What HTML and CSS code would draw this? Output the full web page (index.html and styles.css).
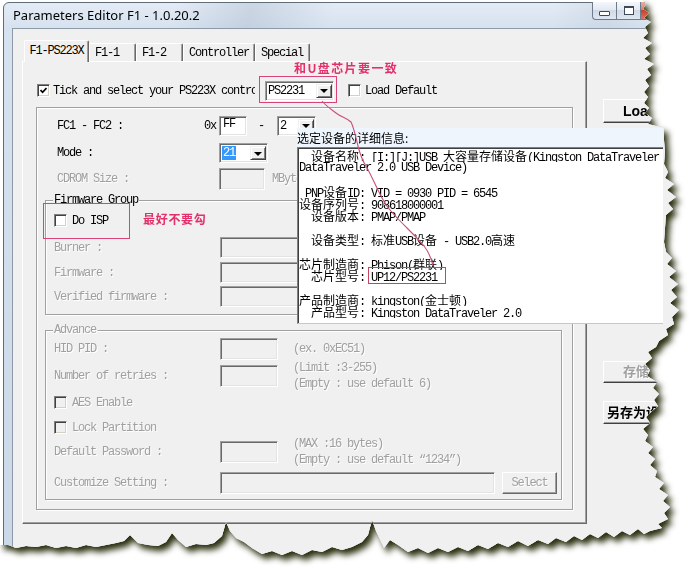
FILE: index.html
```html
<!DOCTYPE html>
<html>
<head>
<meta charset="utf-8">
<title>Parameters Editor F1</title>
<link rel="stylesheet" href="styles.css">
</head>
<body>
<div class="stage">
  <div class="sheet">
    <div class="window">
      <div class="titlebar">
        <span class="title">Parameters Editor F1 - 1.0.20.2</span>
        <div class="caption">
          <span class="cbtn cmin"><i class="ico-min"></i></span>
          <span class="cbtn cmax"><i class="ico-max"></i></span>
          <span class="cbtn cclose"></span>
        </div>
      </div>
      <div class="client">
        <div class="tabctl">
          <div class="tabstrip">
            <div class="tab sel">F1-PS223X</div>
            <div class="tab t47">F1-1</div>
            <div class="tab t47">F1-2</div>
            <div class="tab t72">Controller</div>
            <div class="tab t55">Special</div>
          </div>
          <div class="page">
            <div class="tickrow">
              <span class="chk"><svg width="7" height="7" viewBox="0 0 7 7"><path d="M0.5 3 L2.6 5.3 L6.5 1" fill="none" stroke="#000" stroke-width="1.7"/></svg></span>
              <span class="ticklbl">Tick and select your PS223X controller</span>
              <div class="combo cps"><span class="ctext">PS2231</span><span class="drop"><i class="arrow"></i></span></div>
              <span class="chk ld"></span>
              <span class="lbl-ld">Load Default</span>
            </div>
            <div class="group gmain">
              <div class="frow rfc">
                <div class="flabel"><span>FC1 - FC2 :</span><span>0x</span></div>
                <div class="edit efc">FF</div>
                <span class="dash">-</span>
                <div class="combo c2"><span class="ctext">2</span><span class="drop"><i class="arrow"></i></span></div>
              </div>
              <div class="frow rmode">
                <div class="flabel">Mode :</div>
                <div class="combo cmode"><span class="ctext"><span class="hl">21</span></span><span class="drop"><i class="arrow"></i></span></div>
              </div>
              <div class="frow rcd">
                <div class="flabel dim">CDROM Size :</div>
                <div class="edit dis ecd"></div>
                <span class="unit dim">MBytes</span>
              </div>
              <div class="group gfw">
                <span class="legend">Firmware Group</span>
                <div class="crow risp"><span class="chk"></span><span class="clbl">Do ISP</span></div>
                <div class="frow2 rburn"><span class="flabel2 dim">Burner :</span><div class="edit dis ewide"></div></div>
                <div class="frow2 rfwf"><span class="flabel2 dim">Firmware :</span><div class="edit dis ewide"></div></div>
                <div class="frow2 rver"><span class="flabel2 dim">Verified firmware :</span><div class="edit dis ewide"></div></div>
              </div>
              <div class="group gadv">
                <span class="legend dim">Advance</span>
                <div class="frow2 rhid"><span class="flabel2 dim">HID PID :</span><div class="edit dis esm"></div><span class="note dim">(ex. 0xEC51)</span></div>
                <div class="frow2 rret"><span class="flabel2 dim">Number of retries :</span><div class="edit dis esm"></div><span class="note note2 dim">(Limit :3-255)<br>(Empty : use default 6)</span></div>
                <div class="crow raes"><span class="chk dis"></span><span class="clbl dim">AES Enable</span></div>
                <div class="crow rlock"><span class="chk dis"></span><span class="clbl dim">Lock Partition</span></div>
                <div class="frow2 rpwd"><span class="flabel2 dim">Default Password :</span><div class="edit dis esm"></div><span class="note note2 dim">(MAX :16 bytes)<br>(Empty : use default “1234”)</span></div>
                <div class="frow2 rcus"><span class="flabel2 dim">Customize Setting :</span><div class="edit dis ecus"></div><span class="sbtn dim">Select</span></div>
              </div>
            </div>
          </div>
        </div>
        <div class="side">
          <div class="btn bload">Load</div>
          <div class="btn bsave dim">存储设置</div>
          <div class="btn bsaveas">另存为设置档</div>
        </div>
      </div>
    </div>

    <div class="popup">
      <div class="phead">选定设备的详细信息:</div>
      <div class="pbody">
        <div class="pl">  <span class="c">设备名称</span>: [I:][J:]USB <span class="c">大容量存储设备</span>(Kingston DataTraveler</div>
        <div class="pl">DataTraveler 2.0 USB Device)</div>
        <div class="pl"> </div>
        <div class="pl"> PNP<span class="c">设备</span>ID: VID = 0930 PID = 6545</div>
        <div class="pl"><span class="c">设备序列号</span>: 908618000001</div>
        <div class="pl">  <span class="c">设备版本</span>: PMAP/PMAP</div>
        <div class="pl"> </div>
        <div class="pl">  <span class="c">设备类型</span>: <span class="c">标准</span>USB<span class="c">设备</span> - USB2.0<span class="c">高速</span></div>
        <div class="pl"> </div>
        <div class="pl"><span class="c">芯片制造商</span>: Phison(<span class="c">群联</span>)</div>
        <div class="pl">  <span class="c">芯片型号</span>: UP12/PS2231</div>
        <div class="pl"> </div>
        <div class="pl"><span class="c">产品制造商</span>: kingston(<span class="c">金士顿</span>)</div>
        <div class="pl">  <span class="c">产品型号</span>: Kingston DataTraveler 2.0</div>
      </div>
    </div>

    <span class="mark mk-combo"></span>
    <span class="mark mk-isp"></span>
    <span class="mark mk-chip"></span>
    <span class="redtxt rt1">和U盘芯片要一致</span>
    <span class="redtxt rt2">最好不要勾</span>
    <svg class="wave" width="691" height="574" viewBox="0 0 691 574">
      <path d="M322 101 C326 106 331 109 336 113 C341 117 347 118 351 122 C354 128 356 138 358 146 C360 154 362 160 366 166 C370 173 373 180 377 188 C381 196 384 203 390 210 C396 217 402 223 408 229 C414 235 419 240 424 246 C428 251 431 257 433 266" fill="none" stroke="#c9507a" stroke-width="1.1"/>
    </svg>
  </div>
</div>
</body>
</html>
```

FILE: styles.css
```css
html, body {
  margin: 0;
  padding: 0;
  background: #fff;
}

body {
  font-family: "Liberation Mono", "Courier New", "DejaVu Sans Mono", monospace;
  font-size: 12px;
  letter-spacing: -1.2px;
  line-height: 12px;
  color: #000;
}

.stage {
  width: 691px;
  height: 574px;
  filter: drop-shadow(4px 5px 3px rgba(34, 40, 6, 0.97));
}

.sheet {
  position: relative;
  width: 691px;
  height: 574px;
  overflow: hidden;
  background: #fff;
  clip-path: polygon(
    0 0, 642px 0, 646px 4px, 643px 9px, 649px 13px, 644px 18px, 651px 22px, 645px 27px, 648px 33px, 643px 38px,
    652px 43px, 645px 48px, 650px 54px, 644px 59px, 654px 64px, 647px 69px, 651px 75px, 645px 80px, 649px 86px,
    644px 92px, 648px 97px, 644px 103px, 649px 108px, 645px 113px, 652px 118px, 648px 124px, 664px 128px,
    664px 140px, 665px 152px, 664px 164px, 668px 172px, 665px 178px, 674px 184px, 667px 190px, 676px 197px,
    668px 203px, 673px 209px, 666px 215px, 665px 228px, 664px 242px, 666px 252px, 672px 258px, 667px 264px,
    676px 271px, 669px 277px, 678px 284px, 671px 290px, 677px 297px, 670px 303px, 679px 310px, 672px 317px,
    674px 324px, 666px 329px, 668px 335px, 659px 341px, 656px 347px, 648px 352px, 652px 358px, 645px 364px,
    650px 370px, 647px 376px, 657px 382px, 653px 388px, 659px 394px, 654px 400px, 658px 406px, 651px 412px,
    646px 417px, 650px 423px, 643px 429px, 648px 435px, 645px 441px, 653px 447px, 648px 453px, 655px 459px,
    650px 465px, 657px 471px, 655px 477px, 664px 483px, 659px 489px, 668px 495px, 663px 501px, 670px 507px,
    664px 513px, 668px 519px, 658px 524px, 662px 528px, 650px 531px,
    644px 534px, 638px 529px, 630px 535px, 622px 531px, 614px 537px, 606px 532px, 598px 538px, 590px 534px,
    582px 540px, 574px 536px, 566px 542px, 556px 538px, 548px 544px, 538px 540px, 528px 546px, 518px 541px,
    508px 547px, 498px 543px, 488px 549px, 478px 545px, 468px 551px, 458px 547px, 448px 552px, 438px 548px,
    428px 553px, 418px 548px, 408px 552px, 398px 545px, 390px 540px, 384px 548px, 376px 531px, 372px 520px,
    368px 535px, 362px 542px, 352px 547px, 342px 550px, 332px 547px, 322px 552px, 312px 550px, 302px 555px,
    292px 551px, 282px 555px, 272px 551px, 262px 554px, 252px 548px, 244px 542px, 236px 538px, 230px 531px,
    226px 522px, 222px 536px, 214px 543px, 206px 545px, 196px 544px, 186px 547px, 178px 540px, 172px 533px,
    166px 542px, 158px 546px, 148px 545px, 138px 543px, 130px 535px, 124px 541px, 116px 543px, 106px 545px,
    96px 547px, 86px 545px, 76px 548px, 66px 546px, 56px 548px, 46px 545px, 36px 547px, 26px 546px,
    16px 548px, 8px 545px, 0 545px
  );
}

/* ---------- window frame ---------- */
.window {
  margin: 2px 0 0 3px;
  width: 686px;
  height: 560px;
  box-sizing: border-box;
  border: 1px solid #5f6c7a;
  border-radius: 6px 6px 0 0;
  background: linear-gradient(to bottom, #e3ebf5 0, #d6e2ef 26px, #cbd8e7 100%);
  display: flex;
  flex-direction: column;
}

.titlebar {
  height: 25px;
  flex: none;
  display: flex;
  justify-content: space-between;
  align-items: flex-start;
  background: linear-gradient(100deg, rgba(255,255,255,0) 25%, rgba(160,175,195,0.35) 36%, rgba(255,255,255,0) 48%, rgba(255,255,255,0) 80%, rgba(170,185,200,0.25) 88%, rgba(255,255,255,0) 95%);
}

.title {
  margin: 4px 0 0 9px;
  font-family: "Noto Sans", sans-serif;
  font-size: 13px;
  letter-spacing: 0;
  line-height: 16px;
  color: #000;
}

.caption {
  display: flex;
  margin: -1px 4px 0 0;
}

.cbtn {
  height: 18px;
  box-sizing: border-box;
  border: 1px solid #6d7b8d;
  border-top: none;
  background: linear-gradient(#f4f7fb, #e4eaf2 45%, #d0dbe7 50%, #dfe7f0);
  display: flex;
  align-items: center;
  justify-content: center;
}

.cmin {
  width: 24px;
  border-right: none;
  border-radius: 0 0 0 4px;
}

.cmax {
  width: 25px;
}

.cclose {
  width: 43px;
  border-left: none;
  border-radius: 0 0 4px 0;
  background: linear-gradient(#eab0a2, #d7806c 45%, #c4442c 50%, #d9745c);
}

.ico-min {
  display: block;
  width: 9px;
  height: 3px;
  margin-top: 6px;
  border: 1px solid #3d4a5b;
  border-radius: 1px;
  background: #fff;
}

.ico-max {
  display: block;
  width: 8px;
  height: 6px;
  border: 1px solid #3d4a5b;
  border-top-width: 2px;
  background: #fff;
}

.client {
  flex: 1;
  margin: 0 8px;
  border-left: 1px solid #8d99a6;
  border-top: 1px solid #8d99a6;
  background: #f0f0f0;
  display: flex;
  padding: 11px 0 0 9px;
}

/* ---------- tabs ---------- */
.tabctl {
  width: 565px;
  flex: none;
  display: flex;
  flex-direction: column;
}

.tabstrip {
  height: 21px;
  display: flex;
  align-items: flex-end;
  padding-left: 2px;
}

.tab {
  height: 18px;
  box-sizing: border-box;
  border: 1px solid;
  border-color: #fff #696969 transparent #fff;
  border-bottom: none;
  border-radius: 2px 2px 0 0;
  box-shadow: inset -1px 0 0 #a0a0a0;
  padding: 2px 0 0 5px;
  line-height: 14px;
  white-space: nowrap;
}

.tab.sel {
  width: 65px;
  height: 22px;
  margin-bottom: -1px;
  position: relative;
  z-index: 1;
  background: #f0f0f0;
  padding: 3px 0 0 0;
  text-align: center;
}

.t47 { width: 47px; }
.t72 { width: 72px; }
.t55 { width: 55px; }

.page {
  height: 463px;
  box-sizing: border-box;
  border: 1px solid;
  border-color: #fff #696969 #696969 #fff;
  box-shadow: inset -1px -1px 0 #a0a0a0;
}

/* ---------- controls ---------- */
.chk {
  width: 13px;
  height: 13px;
  flex: none;
  box-sizing: border-box;
  border: 1px solid;
  border-color: #808080 #fff #fff #808080;
  box-shadow: inset 1px 1px 0 #404040, inset -1px -1px 0 #d4d0c8;
  background: #fff;
  display: flex;
  align-items: center;
  justify-content: center;
}

.chk.dis {
  background: #f0f0f0;
}

.edit {
  box-sizing: border-box;
  flex: none;
  border: 1px solid;
  border-color: #a0a0a0 #fff #fff #a0a0a0;
  box-shadow: inset 1px 1px 0 #696969, inset -1px -1px 0 #e3e3e3;
  background: #fff;
  padding: 2px 0 0 3px;
  line-height: 11px;
}

.edit.dis {
  background: #f0f0f0;
}

.combo {
  box-sizing: border-box;
  flex: none;
  border: 1px solid;
  border-color: #a0a0a0 #fff #fff #a0a0a0;
  box-shadow: inset 1px 1px 0 #696969, inset -1px -1px 0 #e3e3e3;
  background: #fff;
  display: flex;
  align-items: center;
  justify-content: space-between;
  padding: 2px 1px 2px 2px;
}

.drop {
  width: 16px;
  align-self: stretch;
  box-sizing: border-box;
  border: 1px solid;
  border-color: #f0f0f0 #404040 #404040 #f0f0f0;
  box-shadow: inset 1px 1px 0 #fff, inset -1px -1px 0 #808080;
  background: #f0f0f0;
  display: flex;
  align-items: center;
  justify-content: center;
}

.arrow {
  display: block;
  width: 0;
  height: 0;
  border-left: 4px solid transparent;
  border-right: 4px solid transparent;
  border-top: 4px solid #000;
  margin-top: 1px;
}

.hl {
  background: #3399ff;
  color: #fff;
  padding: 0 1px;
}

.dim {
  color: #a0a0a0;
  text-shadow: 1px 1px 0 #fff;
}

/* tick row */
.tickrow {
  margin-top: 18px;
  height: 21px;
  padding-left: 14px;
  display: flex;
  align-items: center;
}

.ticklbl {
  margin-left: 3px;
  margin-right: 10px;
  width: 202px;
  overflow: hidden;
  white-space: nowrap;
}

.cps {
  width: 69px;
  height: 20px;
}

.chk.ld {
  margin-left: 14px;
}

.lbl-ld {
  margin-left: 4px;
  white-space: nowrap;
}

/* group boxes */
.group {
  position: relative;
  box-sizing: border-box;
  border: 1px solid #a0a0a0;
  box-shadow: 1px 1px 0 #fff, inset 1px 1px 0 #fff;
}

.legend {
  position: absolute;
  top: -7px;
  left: 7px;
  padding: 0 1px;
  background: #f0f0f0;
  line-height: 12px;
  white-space: nowrap;
}

.gmain {
  margin: 6px 0 0 13px;
  width: 537px;
  height: 403px;
}

.frow {
  display: flex;
  align-items: center;
  padding-left: 20px;
}

.flabel {
  width: 162px;
  flex: none;
  box-sizing: border-box;
  padding-right: 3px;
  display: flex;
  justify-content: space-between;
  white-space: nowrap;
}

.rfc { margin-top: 7px; height: 21px; }
.efc { width: 28px; height: 20px; }
.dash { margin: 0 13px 0 11px; }
.c2 { width: 39px; height: 20px; }

.rmode { margin-top: 7px; height: 20px; }
.cmode { width: 49px; height: 20px; }

.rcd { margin-top: 5px; height: 22px; }
.ecd { width: 46px; height: 22px; }
.unit { margin-left: 7px; white-space: nowrap; }

.gfw {
  margin: 10px 0 0 8px;
  width: 517px;
  height: 115px;
}

.crow {
  display: flex;
  align-items: center;
  padding-left: 8px;
  height: 13px;
}

.clbl {
  margin-left: 5px;
  white-space: nowrap;
}

.risp { margin-top: 13px; }

.frow2 {
  display: flex;
  align-items: center;
  padding-left: 8px;
}

.flabel2 {
  width: 166px;
  flex: none;
  white-space: nowrap;
}

.rburn { margin-top: 10px; height: 21px; }
.rfwf { margin-top: 4px; height: 21px; }
.rver { margin-top: 3px; height: 21px; }
.ewide { width: 336px; height: 21px; }

.gadv {
  margin: 15px 0 0 8px;
  width: 517px;
  height: 170px;
}

.rhid { margin-top: 7px; height: 22px; }
.rret { margin-top: 5px; height: 22px; }
.raes { margin-top: 9px; }
.rlock { margin-top: 12px; }
.rpwd { margin-top: 7px; height: 22px; }
.rcus { margin-top: 9px; height: 22px; }

.esm { width: 58px; height: 22px; }
.ecus { width: 275px; height: 22px; }

.note {
  margin-left: 15px;
  white-space: nowrap;
}

.note2 {
  line-height: 16px;
}

.sbtn {
  margin-left: 7px;
  width: 55px;
  height: 22px;
  box-sizing: border-box;
  border: 1px solid;
  border-color: #fff #696969 #696969 #fff;
  box-shadow: inset -1px -1px 0 #a0a0a0;
  display: flex;
  align-items: center;
  justify-content: center;
}

/* side buttons */
.side {
  margin-left: 16px;
  padding-top: 59px;
  display: flex;
  flex-direction: column;
  width: 90px;
  flex: none;
}

.btn {
  box-sizing: border-box;
  border: 1px solid;
  border-color: #fff #404040 #404040 #fff;
  box-shadow: inset -1px -1px 0 #a0a0a0;
  display: flex;
  align-items: center;
  font-family: "Liberation Sans", "Noto Sans CJK SC", sans-serif;
  font-weight: bold;
  font-size: 14px;
  letter-spacing: 0;
  white-space: nowrap;
  overflow: hidden;
}

.bload { height: 24px; padding-left: 19px; }
.bsave { height: 22px; margin-top: 238px; padding-left: 19px; font-size: 13px; }
.bsaveas { height: 23px; margin-top: 18px; padding-left: 3px; font-size: 13px; }

/* ---------- popup (overlay) ---------- */
.popup {
  position: absolute;
  left: 297px;
  top: 128px;
  width: 366px;
}

.phead {
  height: 19px;
  background: #eef5fd;
  font-family: "Noto Sans CJK SC", sans-serif;
  font-size: 12px;
  letter-spacing: 0;
  line-height: 19px;
}

.pbody {
  height: 177px;
  box-sizing: border-box;
  background: #fff;
  border-left: 1px solid #808080;
  border-top: 1px solid #808080;
  border-bottom: 1px solid #c8c8c8;
  box-shadow: inset 1px 1px 0 #404040;
  padding: 2px 0 0 1px;
  overflow: hidden;
}

.pl {
  height: 12px;
  line-height: 12px;
  white-space: pre;
  overflow: hidden;
}

.c {
  font-family: "Noto Sans CJK SC", sans-serif;
  font-size: 12px;
  letter-spacing: 0;
}

/* ---------- annotations (overlay) ---------- */
.mark {
  position: absolute;
  box-sizing: border-box;
  border: 1px solid #d9437a;
}

.mk-combo { left: 259px; top: 76px; width: 78px; height: 27px; }
.mk-isp { left: 43px; top: 203px; width: 87px; height: 36px; }
.mk-chip { left: 368px; top: 267px; width: 78px; height: 17px; border-color: #c8455f; }

.redtxt {
  position: absolute;
  font-family: "Noto Sans CJK SC", sans-serif;
  font-weight: bold;
  font-size: 12px;
  line-height: 14px;
  color: #e4306a;
  white-space: nowrap;
}

.rt1 { left: 294px; top: 61px; letter-spacing: 1.4px; }
.rt2 { left: 143px; top: 212px; letter-spacing: 0.7px; }

.wave {
  position: absolute;
  left: 0;
  top: 0;
  pointer-events: none;
}
```
